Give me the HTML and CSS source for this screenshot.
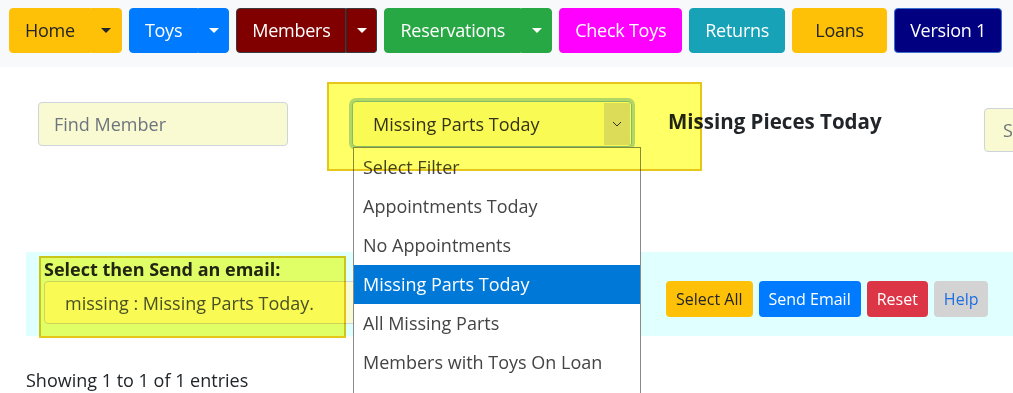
FILE: index.html
```html
<!DOCTYPE html>
<html lang="en">
<head>
  <meta charset="UTF-8">
  <meta name="viewport" content="width=device-width, initial-scale=1.0">
  <title>Toy Library - Members</title>
  <link rel="stylesheet" href="styles.css">
</head>
<body>

  <nav class="topnav">
    <div class="btn-group">
      <button class="btn btn-yellow">Home</button>
      <button class="btn btn-yellow toggle"><span class="caret"></span></button>
    </div>
    <div class="btn-group">
      <button class="btn btn-blue">Toys</button>
      <button class="btn btn-blue toggle"><span class="caret"></span></button>
    </div>
    <div class="btn-group">
      <button class="btn btn-maroon">Members</button>
      <button class="btn btn-maroon toggle"><span class="caret"></span></button>
    </div>
    <div class="btn-group">
      <button class="btn btn-green">Reservations</button>
      <button class="btn btn-green toggle"><span class="caret"></span></button>
    </div>
    <button class="btn btn-magenta">Check Toys</button>
    <button class="btn btn-teal btn-wide">Returns</button>
    <button class="btn btn-yellow btn-wide">Loans</button>
    <button class="btn btn-navy">Version 1</button>
  </nav>

  <div class="page">
    <div class="filter-row">
      <input type="text" class="find-input" placeholder="Find Member">
      <div class="filter-select">
        <div class="select-box">
          <span>Missing Parts Today</span>
          <span class="select-arrow">
            <svg width="10" height="6" viewBox="0 0 10 6"><path d="M1 1 L5 5 L9 1" fill="none" stroke="#333" stroke-width="1"/></svg>
          </span>
        </div>
        <ul class="select-list">
          <li>Select Filter</li>
          <li>Appointments Today</li>
          <li>No Appointments</li>
          <li class="active">Missing Parts Today</li>
          <li>All Missing Parts</li>
          <li>Members with Toys On Loan</li>
        </ul>
      </div>
      <h3 class="filter-title">Missing Pieces Today</h3>
      <input type="text" class="search-input" placeholder="Search">
    </div>

    <div class="email-band">
      <div class="email-col">
        <label for="email-group">Select then Send an email:</label>
        <input type="text" id="email-group" class="email-input" value="missing : Missing Parts Today.">
      </div>
      <div class="email-actions">
        <button class="sbtn btn-yellow">Select All</button>
        <button class="sbtn btn-blue">Send Email</button>
        <button class="sbtn btn-red">Reset</button>
        <button class="sbtn btn-help">Help</button>
      </div>
    </div>

    <p class="showing">Showing 1 to 1 of 1 entries</p>
  </div>

  <div class="mark mark-filter"></div>
  <div class="mark mark-email"></div>

</body>
</html>
```

FILE: styles.css
```css
html, body {
  overflow: hidden;
}
body {
  font-family: "Open Sans", "Noto Sans", sans-serif;
  margin: 0;
  padding: 0;
  color: #212529;
  background-color: white;
  position: relative;
  height: 393px;
}

/* top navigation */
.topnav {
  display: flex;
  gap: 7px;
  padding: 8px 9px 14px;
  background-color: #f8f9fa;
}
.btn-group {
  display: flex;
}
.btn {
  font-family: inherit;
  font-size: 18px;
  line-height: 27px;
  letter-spacing: -0.25px;
  padding: 8px 15px;
  border: 1px solid transparent;
  border-radius: 4px;
  cursor: pointer;
  white-space: nowrap;
}
.btn-wide {
  min-width: 95px;
}
.btn-group .btn:first-child {
  border-top-right-radius: 0;
  border-bottom-right-radius: 0;
}
.btn-group .toggle {
  width: 31px;
  padding: 0;
  border-top-left-radius: 0;
  border-bottom-left-radius: 0;
  display: flex;
  align-items: center;
  justify-content: center;
}
.caret {
  width: 0;
  height: 0;
  border-left: 5px solid transparent;
  border-right: 5px solid transparent;
  border-top: 5px solid currentColor;
}
.btn-yellow { background-color: #ffc107; border-color: #ffc107; color: #212529; }
.btn-blue { background-color: #007bff; border-color: #007bff; color: white; }
.btn-maroon { background-color: #800000; border-color: #3a3a3a; color: white; }
.btn-maroon.toggle { border-left-color: #2b2b2b; }
.btn-maroon:first-child { border-right-color: #3a3a3a; }
.btn-green { background-color: #28a745; border-color: #28a745; color: white; }
.btn-magenta { background-color: #ff00ff; border-color: #ff00ff; color: white; }
.btn-teal { background-color: #17a2b8; border-color: #17a2b8; color: white; }
.btn-navy { background-color: #000080; border-color: #3b6fd0; color: white; }
.btn-red { background-color: #dc3545; border-color: #dc3545; color: white; }
.btn-help { background-color: #d3d3d3; border-color: #d3d3d3; color: #1f6fe0; }

/* page */
.page {
  padding-left: 26px;
}
.filter-row {
  display: flex;
  align-items: flex-start;
  margin-top: 34px;
  height: 52px;
}
.find-input, .search-input, .email-input {
  font-family: inherit;
  font-size: 18px;
  background-color: #fafad2;
  border: 1px solid #ced4da;
  border-radius: 4px;
  box-sizing: border-box;
  color: #495057;
  outline: none;
}
.find-input::placeholder, .search-input::placeholder {
  color: #6c757d;
}
.find-input {
  margin: 1px 0 0 12px;
  width: 250px;
  height: 44px;
  padding: 0 15px;
}
.filter-select {
  position: relative;
  margin-left: 64px;
  width: 280px;
  flex-shrink: 0;
}
.select-box {
  height: 46px;
  box-sizing: border-box;
  display: flex;
  align-items: center;
  justify-content: space-between;
  padding-left: 20px;
  font-size: 18px;
  color: #333;
  background-color: #fafad2;
  border: 1px solid #80bdff;
  border-radius: 4px;
  box-shadow: 0 0 0 3px rgba(0, 123, 255, 0.3);
}
.select-arrow {
  width: 26px;
  align-self: stretch;
  margin: 1px;
  background-color: #dcdcdc;
  display: flex;
  align-items: center;
  justify-content: center;
}
.select-list {
  position: absolute;
  top: 100%;
  left: 1px;
  width: 288px;
  margin: 0;
  padding: 0 0 39px;
  list-style: none;
  background-color: white;
  border: 1px solid #8a8a8a;
  box-sizing: border-box;
  z-index: 5;
}
.select-list li {
  height: 39px;
  line-height: 39px;
  padding-left: 9px;
  font-size: 18px;
  color: #444;
  white-space: nowrap;
}
.select-list li.active {
  background-color: #0078d7;
  color: white;
}
.filter-title {
  margin: 7px 0 0 36px;
  font-size: 20.5px;
  line-height: 26px;
  font-weight: bold;
  width: 316px;
  flex-shrink: 0;
}
.search-input {
  margin-top: 7px;
  width: 250px;
  height: 44px;
  padding: 0 18px;
  flex-shrink: 0;
}

/* email band */
.email-band {
  display: flex;
  align-items: flex-end;
  margin-top: 99px;
  padding: 6px 0 12px 18px;
  background-color: #e0ffff;
}
.email-col {
  display: flex;
  flex-direction: column;
  width: 330px;
}
.email-col label {
  font-size: 18px;
  font-weight: bold;
  line-height: 23px;
  white-space: nowrap;
}
.email-input {
  height: 43px;
  padding: 0 20px;
  width: 330px;
}
.email-actions {
  display: flex;
  gap: 6px;
  margin-left: 292px;
  padding-bottom: 7px;
}
.sbtn {
  font-family: inherit;
  font-size: 16px;
  line-height: 24px;
  padding: 5px 9px;
  border: 1px solid transparent;
  border-radius: 4px;
  cursor: pointer;
  white-space: nowrap;
}

.showing {
  margin: 32px 0 0;
  font-size: 18px;
  line-height: 24px;
}

/* highlighter marks drawn over the page */
.mark {
  position: absolute;
  background-color: #ffff66;
  mix-blend-mode: multiply;
  border: 2px solid #e6c619;
  box-sizing: border-box;
  z-index: 10;
  pointer-events: none;
}
.mark-filter {
  left: 327px;
  top: 82px;
  width: 375px;
  height: 89px;
}
.mark-email {
  left: 39px;
  top: 256px;
  width: 307px;
  height: 82px;
}
```
